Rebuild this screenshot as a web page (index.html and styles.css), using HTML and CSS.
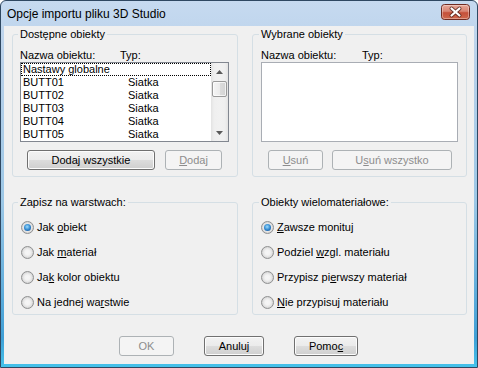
FILE: index.html
```html
<!DOCTYPE html>
<html lang="pl">
<head>
<meta charset="utf-8">
<title>Opcje importu pliku 3D Studio</title>
<link rel="stylesheet" href="styles.css">
</head>
<body>
<div class="window">
  <div class="titlebar">
    <span class="title">Opcje importu pliku 3D Studio</span>
    <div class="close">
      <svg width="29" height="16" viewBox="0 0 29 16">
        <defs>
          <linearGradient id="cg" x1="0" y1="0" x2="0" y2="1">
            <stop offset="0" stop-color="#e9a999"/>
            <stop offset="0.45" stop-color="#d88574"/>
            <stop offset="0.55" stop-color="#c5503a"/>
            <stop offset="1" stop-color="#cf6a4f"/>
          </linearGradient>
        </defs>
        <rect x="0.5" y="0.5" width="28" height="15" rx="3" fill="url(#cg)" stroke="#6f2b22"/>
        <rect x="1.5" y="1.5" width="26" height="13" rx="2" fill="none" stroke="rgba(255,255,255,0.35)"/>
        <path d="M10.5 4.5 L18.5 11.5 M18.5 4.5 L10.5 11.5" stroke="#4a1f19" stroke-width="4" stroke-linecap="round" opacity="0.75"/>
        <path d="M10.5 4.5 L18.5 11.5 M18.5 4.5 L10.5 11.5" stroke="#ffffff" stroke-width="2.2" stroke-linecap="round"/>
      </svg>
    </div>
  </div>
  <div class="client">
    <div class="grouprow">
      <div class="group g-wide tall pad7">
        <div class="legend">Dostępne obiekty</div>
        <div class="cols"><span class="c-name">Nazwa obiektu:</span><span>Typ:</span></div>
        <div class="listbox lb-left">
          <div class="items">
            <div class="item focus"><span class="name">Nastawy globalne</span></div>
            <div class="item"><span class="name">BUTT01</span><span>Siatka</span></div>
            <div class="item"><span class="name">BUTT02</span><span>Siatka</span></div>
            <div class="item"><span class="name">BUTT03</span><span>Siatka</span></div>
            <div class="item"><span class="name">BUTT04</span><span>Siatka</span></div>
            <div class="item"><span class="name">BUTT05</span><span>Siatka</span></div>
          </div>
          <div class="scrollbar">
            <div class="sb-btn">
              <svg width="7" height="4" viewBox="0 0 7 4"><polygon points="0,4 3.5,0 7,4" fill="#5a5a5a"/></svg>
            </div>
            <div class="thumb"></div>
            <div class="track"></div>
            <div class="sb-btn">
              <svg width="7" height="4" viewBox="0 0 7 4"><polygon points="0,0 7,0 3.5,4" fill="#5a5a5a"/></svg>
            </div>
          </div>
        </div>
        <div class="btnrow gap10">
          <button class="btn w128">Doda<u>j</u> wszystkie</button>
          <button class="btn w57" disabled><u>D</u>odaj</button>
        </div>
      </div>
      <div class="group g-narrow tall pad8">
        <div class="legend">Wybrane obiekty</div>
        <div class="cols"><span class="c-name wide">Nazwa obiektu:</span><span>Typ:</span></div>
        <div class="listbox lb-right"></div>
        <div class="btnrow gap9">
          <button class="btn w55" disabled><u>U</u>suń</button>
          <button class="btn w120" disabled>U<u>s</u>uń wszystko</button>
        </div>
      </div>
    </div>

    <div class="grouprow second">
      <div class="group g-wide short pad8">
        <div class="legend shift">Zapisz na warstwach:</div>
        <div class="opt"><span class="radio checked"></span><span class="lbl">Jak <u>o</u>biekt</span></div>
        <div class="opt"><span class="radio"></span><span class="lbl">Jak <u>m</u>ateriał</span></div>
        <div class="opt"><span class="radio"></span><span class="lbl">Ja<u>k</u> kolor obiektu</span></div>
        <div class="opt"><span class="radio"></span><span class="lbl">Na jednej wa<u>r</u>stwie</span></div>
      </div>
      <div class="group g-narrow short pad8">
        <div class="legend">Obiekty wielomateriałowe:</div>
        <div class="opt"><span class="radio checked"></span><span class="lbl"><u>Z</u>awsze monituj</span></div>
        <div class="opt"><span class="radio"></span><span class="lbl">Podziel <u>w</u>zgl. materiału</span></div>
        <div class="opt"><span class="radio"></span><span class="lbl">Przypisz pi<u>e</u>rwszy materiał</span></div>
        <div class="opt"><span class="radio"></span><span class="lbl"><u>N</u>ie przypisuj materiału</span></div>
      </div>
    </div>

    <div class="dlgbtns">
      <button class="btn w55" disabled>OK</button>
      <button class="btn w60">Anuluj</button>
      <button class="btn w64">Pomo<u>c</u></button>
    </div>
  </div>
</div>
</body>
</html>
```

FILE: styles.css
```css
* { box-sizing: border-box; }

body {
  margin: 0;
  font-family: "Liberation Sans", Arial, sans-serif;
  font-size: 11px;
  color: #000;
  background: #ffffff;
}

.window {
  width: 478px;
  height: 368px;
  border: 1px solid #2f4862;
  border-radius: 6px 6px 0 0;
  background: linear-gradient(to bottom, #c6daf0 0px, #b9d1ea 60px, #9cc7e6 55%, #3f9fd6 92%, #45c2ea 100%);
  display: flex;
  flex-direction: column;
  overflow: hidden;
}

.titlebar {
  height: 25px;
  flex: none;
  display: flex;
  align-items: flex-start;
  padding-left: 6px;
}

.title {
  font-size: 12px;
  line-height: 15px;
  margin-top: 6px;
  color: #000;
}

.close {
  margin-left: auto;
  margin-right: 7px;
  margin-top: 3px;
  width: 29px;
  height: 16px;
}
.close svg { display: block; }

.client {
  flex: 1;
  margin: 0 3px 3px;
  background: #f0f0f0;
  padding: 8px 0 0 8px;
  display: flex;
  flex-direction: column;
}

.grouprow {
  display: flex;
  gap: 14px;
}
.grouprow.second { margin-top: 25px; }

.group {
  border: 1px solid #d5dfe5;
  border-radius: 3px;
  display: flex;
  flex-direction: column;
}
.g-wide { width: 226px; }
.g-narrow { width: 215px; }
.tall { height: 143px; }
.short { height: 113px; }
.pad7 { padding-left: 7px; }
.pad8 { padding-left: 8px; }

.legend {
  align-self: flex-start;
  margin: -7px 0 0 -2px;
  padding: 0 2px;
  line-height: 13px;
  height: 13px;
  background: #f0f0f0;
}
.legend.shift { margin-left: -3px; }

.cols {
  display: flex;
  height: 13px;
  line-height: 13px;
  margin-top: 8px;
}
.c-name { width: 100px; }
.c-name.wide { width: 101px; }

.listbox {
  height: 80px;
  border: 1px solid #828790;
  background: #fff;
  display: flex;
}
.lb-left { width: 209px; }
.lb-right { width: 197px; border-color: #a9adb4; }

.items { flex: 1; }
.item {
  height: 13px;
  line-height: 13px;
  padding-left: 2px;
  display: flex;
  white-space: nowrap;
}
.item .name { width: 105px; }
.item.focus {
  outline: 1px dotted #000;
  outline-offset: -1px;
}

.scrollbar {
  width: 17px;
  display: flex;
  flex-direction: column;
  background: linear-gradient(to right, #e3e3e3 0, #efefef 3px, #f1f1f1 50%, #efefef 14px, #e3e3e3 17px);
}
.sb-btn {
  height: 17px;
  display: flex;
  align-items: center;
  justify-content: center;
}
.sb-btn svg { display: block; }
.thumb {
  height: 16px;
  margin: 1px 1px 0;
  border: 1px solid #9a9a9a;
  border-radius: 2px;
  background: linear-gradient(to right, #f5f5f5 0, #ececec 50%, #dcdcdc 51%, #d3d3d3 100%);
  box-shadow: inset 0 0 0 1px rgba(255, 255, 255, 0.7);
}
.track { flex: 1; }

.btnrow {
  display: flex;
  margin-top: 8px;
  padding-left: 7px;
}
.gap10 { gap: 10px; }
.gap9 { gap: 9px; }

.btn {
  height: 20px;
  padding: 0;
  border: 1px solid #707070;
  border-radius: 3px;
  background: linear-gradient(to bottom, #f2f2f2 0%, #ebebeb 50%, #dddddd 50%, #cfcfcf 100%);
  box-shadow: inset 0 0 0 1px #fcfcfc;
  font-family: "Liberation Sans", Arial, sans-serif;
  font-size: 11px;
  line-height: 18px;
  color: #000;
  text-align: center;
}
.btn:disabled {
  border-color: #adb2b5;
  background: #f4f4f4;
  box-shadow: none;
  color: #8d8d8d;
}
.w55 { width: 55px; }
.w57 { width: 57px; }
.w60 { width: 60px; }
.w64 { width: 64px; }
.w120 { width: 120px; }
.w128 { width: 128px; }

.opt {
  display: flex;
  align-items: center;
  height: 13px;
  line-height: 13px;
  margin-top: 12px;
  white-space: nowrap;
}
.radio {
  width: 13px;
  height: 13px;
  flex: none;
  border-radius: 50%;
  border: 1px solid #8f9091;
  background: radial-gradient(circle at 50% 50%, #f6f6f6 0, #f3f3f3 2.5px, #e2e2e2 4.5px, #d4d4d4 5.5px);
  display: flex;
  align-items: center;
  justify-content: center;
}
.radio.checked::after {
  content: "";
  width: 7px;
  height: 7px;
  border-radius: 50%;
  background: radial-gradient(circle at 45% 40%, #9fdcfb 0, #3d93d6 45%, #175ca6 80%, #0d3e78 100%);
}
.lbl { margin-left: 3px; }

.dlgbtns {
  display: flex;
  gap: 30px;
  margin-top: 21px;
  padding-left: 107px;
}
```
